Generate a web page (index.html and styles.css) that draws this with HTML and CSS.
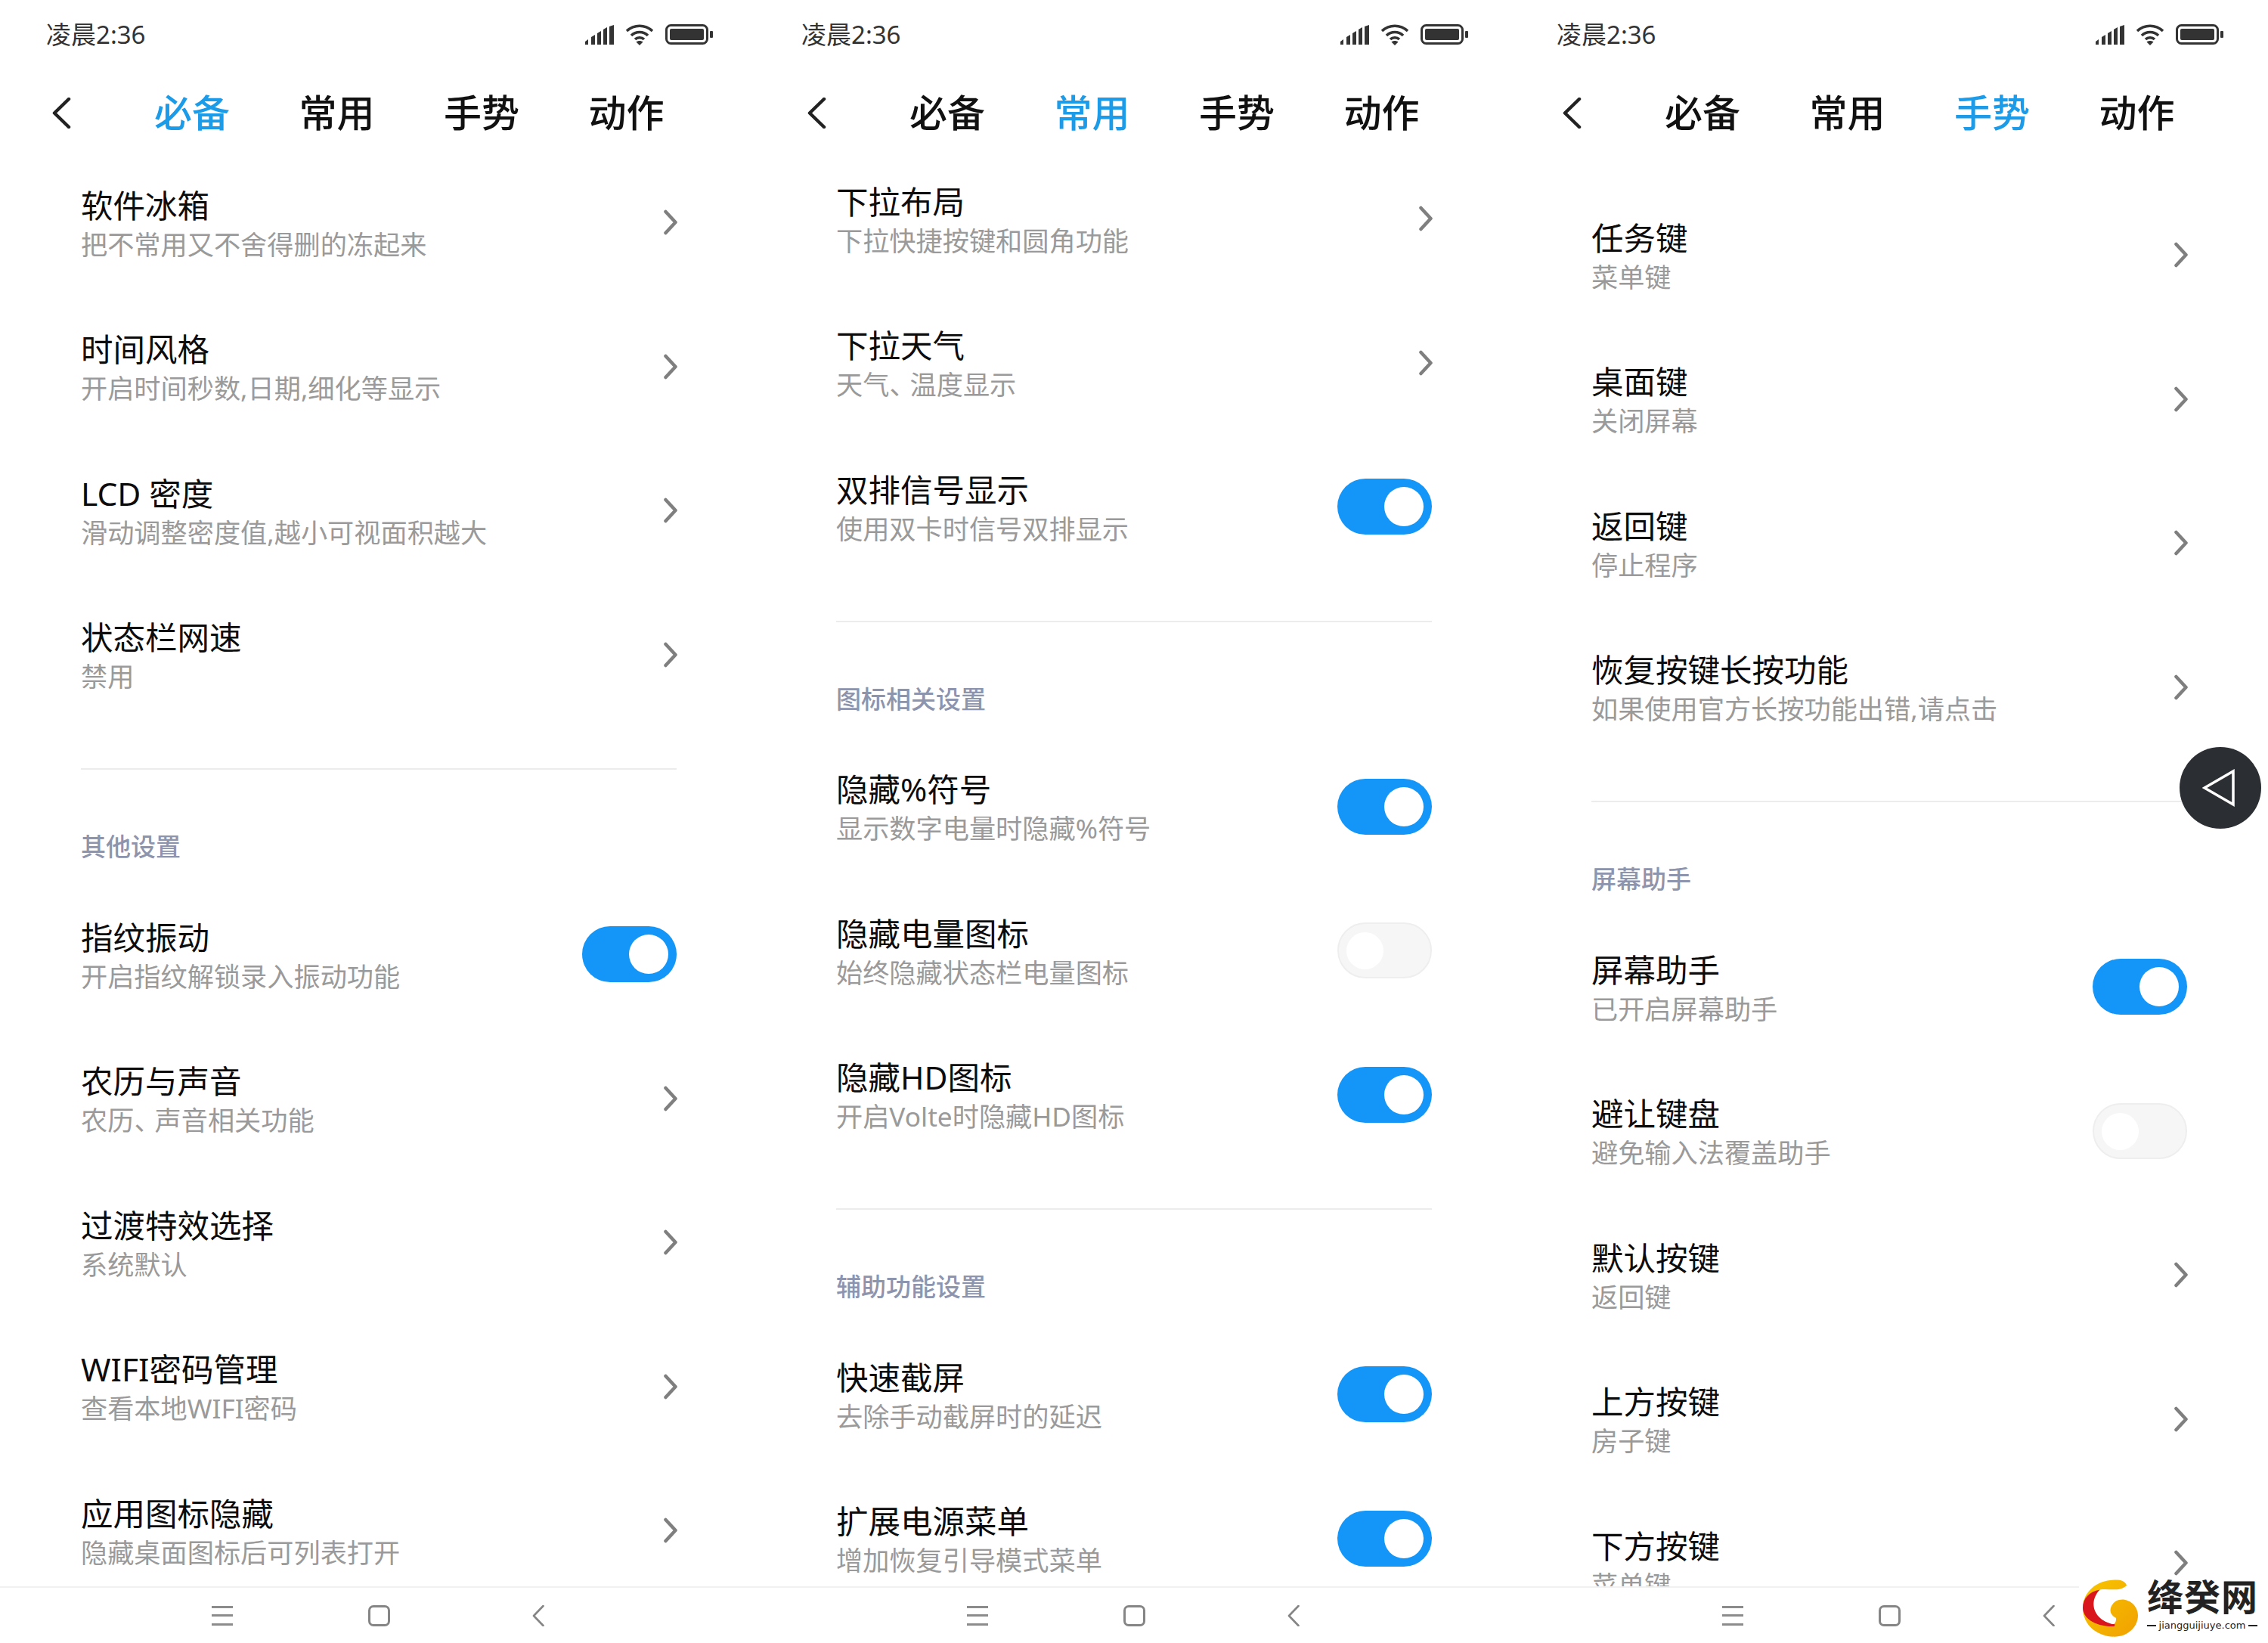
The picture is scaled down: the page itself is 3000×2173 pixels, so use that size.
FILE: index.html
```html
<!DOCTYPE html>
<html lang="zh-CN">
<head>
<meta charset="utf-8">
<title>设置</title>
<link rel="stylesheet" href="styles.css">
</head>
<body>
<svg class="defs" width="0" height="0" aria-hidden="true">
  <defs>
    <symbol id="chev" viewBox="0 0 20 34"><path d="M3.500 3 L16.500 17 L3.500 31" fill="none" stroke="#7f7f7f" stroke-width="4.500" stroke-linecap="round" stroke-linejoin="round"/></symbol>
    <symbol id="signal" viewBox="0 0 38 26">
      <path d="M0 26 V22 L4 19 V26Z M8 26 V16 L13 13 V26Z M16 26 V11 L21 8 V26Z M24 26 V6 L29 3 V26Z M32 26 V2 L38 0 V26Z" fill="#333"/>
    </symbol>
    <symbol id="wifi" viewBox="0 0 38 28">
      <path d="M2 9 C12 0 26 0 36 9 M8 15 C14 9 24 9 30 15 M13 20 C16 17 22 17 25 20" fill="none" stroke="#333" stroke-width="3.600"/>
      <path d="M14.500 23.500 L19 28 L23.500 23.500 C21 21.500 17 21.500 14.500 23.500Z" fill="#333"/>
    </symbol>
    <symbol id="batt" viewBox="0 0 63 27">
      <rect x="1.500" y="1.500" width="54" height="24" rx="6" fill="none" stroke="#333" stroke-width="3"/>
      <rect x="6" y="6" width="45" height="15" rx="2" fill="#333"/>
      <rect x="59" y="9" width="4" height="9" rx="1" fill="#333"/>
    </symbol>
  </defs>
</svg>

<main class="phones">
  <!-- 必备 -->
  <section class="phone">
    <header class="status">
      <span class="time">凌晨2:36</span>
      <span class="status-icons">
        <svg class="ic-signal"><use href="#signal"/></svg>
        <svg class="ic-wifi"><use href="#wifi"/></svg>
        <svg class="ic-batt"><use href="#batt"/></svg>
      </span>
    </header>
    <nav class="tabs">
      <svg class="back" viewBox="0 0 25 41"><path d="M22 2 L3 20.500 L22 39" fill="none" stroke="#222" stroke-width="4.500" stroke-linecap="round" stroke-linejoin="round"/></svg>
      <span class="tab active">必备</span><span class="tab">常用</span><span class="tab">手势</span><span class="tab">动作</span>
    </nav>
    <div class="list list-a">
      <div class="row"><div class="text"><div class="title">软件冰箱</div><div class="sub">把不常用又不舍得删的冻起来</div></div><svg class="chev"><use href="#chev"/></svg></div>
      <div class="row"><div class="text"><div class="title">时间风格</div><div class="sub">开启时间秒数,日期,细化等显示</div></div><svg class="chev"><use href="#chev"/></svg></div>
      <div class="row"><div class="text"><div class="title">LCD 密度</div><div class="sub">滑动调整密度值,越小可视面积越大</div></div><svg class="chev"><use href="#chev"/></svg></div>
      <div class="row"><div class="text"><div class="title">状态栏网速</div><div class="sub">禁用</div></div><svg class="chev"><use href="#chev"/></svg></div>
      <div class="divider"></div>
      <h2 class="group">其他设置</h2>
      <div class="row"><div class="text"><div class="title">指纹振动</div><div class="sub">开启指纹解锁录入振动功能</div></div><span class="toggle"></span></div>
      <div class="row"><div class="text"><div class="title">农历与声音</div><div class="sub">农历<span class="dun">、</span>声音相关功能</div></div><svg class="chev"><use href="#chev"/></svg></div>
      <div class="row"><div class="text"><div class="title">过渡特效选择</div><div class="sub">系统默认</div></div><svg class="chev"><use href="#chev"/></svg></div>
      <div class="row"><div class="text"><div class="title">WIFI密码管理</div><div class="sub">查看本地WIFI密码</div></div><svg class="chev"><use href="#chev"/></svg></div>
      <div class="row"><div class="text"><div class="title">应用图标隐藏</div><div class="sub">隐藏桌面图标后可列表打开</div></div><svg class="chev"><use href="#chev"/></svg></div>
    </div>
    <footer class="nav">
      <span class="nav-menu"></span><span class="nav-home"></span>
      <svg class="nav-back" viewBox="0 0 16 28"><path d="M14.500 1 L2 14 L14.500 27" fill="none" stroke="#858585" stroke-width="2.600" stroke-linecap="round" stroke-linejoin="round"/></svg>
    </footer>
  </section>

  <!-- 常用 -->
  <section class="phone">
    <header class="status">
      <span class="time">凌晨2:36</span>
      <span class="status-icons">
        <svg class="ic-signal"><use href="#signal"/></svg>
        <svg class="ic-wifi"><use href="#wifi"/></svg>
        <svg class="ic-batt"><use href="#batt"/></svg>
      </span>
    </header>
    <nav class="tabs">
      <svg class="back" viewBox="0 0 25 41"><path d="M22 2 L3 20.500 L22 39" fill="none" stroke="#222" stroke-width="4.500" stroke-linecap="round" stroke-linejoin="round"/></svg>
      <span class="tab">必备</span><span class="tab active">常用</span><span class="tab">手势</span><span class="tab">动作</span>
    </nav>
    <div class="list list-b">
      <div class="row"><div class="text"><div class="title">下拉布局</div><div class="sub">下拉快捷按键和圆角功能</div></div><svg class="chev"><use href="#chev"/></svg></div>
      <div class="row"><div class="text"><div class="title">下拉天气</div><div class="sub">天气<span class="dun">、</span>温度显示</div></div><svg class="chev"><use href="#chev"/></svg></div>
      <div class="row"><div class="text"><div class="title">双排信号显示</div><div class="sub">使用双卡时信号双排显示</div></div><span class="toggle"></span></div>
      <div class="divider"></div>
      <h2 class="group">图标相关设置</h2>
      <div class="row"><div class="text"><div class="title">隐藏%符号</div><div class="sub">显示数字电量时隐藏%符号</div></div><span class="toggle"></span></div>
      <div class="row"><div class="text"><div class="title">隐藏电量图标</div><div class="sub">始终隐藏状态栏电量图标</div></div><span class="toggle off"></span></div>
      <div class="row"><div class="text"><div class="title">隐藏HD图标</div><div class="sub">开启Volte时隐藏HD图标</div></div><span class="toggle"></span></div>
      <div class="divider"></div>
      <h2 class="group">辅助功能设置</h2>
      <div class="row"><div class="text"><div class="title">快速截屏</div><div class="sub">去除手动截屏时的延迟</div></div><span class="toggle"></span></div>
      <div class="row"><div class="text"><div class="title">扩展电源菜单</div><div class="sub">增加恢复引导模式菜单</div></div><span class="toggle"></span></div>
    </div>
    <footer class="nav">
      <span class="nav-menu"></span><span class="nav-home"></span>
      <svg class="nav-back" viewBox="0 0 16 28"><path d="M14.500 1 L2 14 L14.500 27" fill="none" stroke="#858585" stroke-width="2.600" stroke-linecap="round" stroke-linejoin="round"/></svg>
    </footer>
  </section>

  <!-- 手势 -->
  <section class="phone">
    <header class="status">
      <span class="time">凌晨2:36</span>
      <span class="status-icons">
        <svg class="ic-signal"><use href="#signal"/></svg>
        <svg class="ic-wifi"><use href="#wifi"/></svg>
        <svg class="ic-batt"><use href="#batt"/></svg>
      </span>
    </header>
    <nav class="tabs">
      <svg class="back" viewBox="0 0 25 41"><path d="M22 2 L3 20.500 L22 39" fill="none" stroke="#222" stroke-width="4.500" stroke-linecap="round" stroke-linejoin="round"/></svg>
      <span class="tab">必备</span><span class="tab">常用</span><span class="tab active">手势</span><span class="tab">动作</span>
    </nav>
    <div class="list list-c">
      <div class="row"><div class="text"><div class="title">任务键</div><div class="sub">菜单键</div></div><svg class="chev"><use href="#chev"/></svg></div>
      <div class="row"><div class="text"><div class="title">桌面键</div><div class="sub">关闭屏幕</div></div><svg class="chev"><use href="#chev"/></svg></div>
      <div class="row"><div class="text"><div class="title">返回键</div><div class="sub">停止程序</div></div><svg class="chev"><use href="#chev"/></svg></div>
      <div class="row"><div class="text"><div class="title">恢复按键长按功能</div><div class="sub">如果使用官方长按功能出错,请点击</div></div><svg class="chev"><use href="#chev"/></svg></div>
      <div class="divider"></div>
      <h2 class="group">屏幕助手</h2>
      <div class="row"><div class="text"><div class="title">屏幕助手</div><div class="sub">已开启屏幕助手</div></div><span class="toggle"></span></div>
      <div class="row"><div class="text"><div class="title">避让键盘</div><div class="sub">避免输入法覆盖助手</div></div><span class="toggle off"></span></div>
      <div class="row"><div class="text"><div class="title">默认按键</div><div class="sub">返回键</div></div><svg class="chev"><use href="#chev"/></svg></div>
      <div class="row"><div class="text"><div class="title">上方按键</div><div class="sub">房子键</div></div><svg class="chev"><use href="#chev"/></svg></div>
      <div class="row"><div class="text"><div class="title">下方按键</div><div class="sub">菜单键</div></div><svg class="chev"><use href="#chev"/></svg></div>
    </div>
    <footer class="nav">
      <span class="nav-menu"></span><span class="nav-home"></span>
      <svg class="nav-back" viewBox="0 0 16 28"><path d="M14.500 1 L2 14 L14.500 27" fill="none" stroke="#858585" stroke-width="2.600" stroke-linecap="round" stroke-linejoin="round"/></svg>
    </footer>

    <div class="float-btn">
      <svg viewBox="0 0 44 50"><path d="M3 25 L41 3 V47 Z" fill="none" stroke="#fff" stroke-width="3.500" stroke-linejoin="miter"/></svg>
    </div>

    <div class="mark">
      <svg class="mark-logo" viewBox="465 418 220 227">
        <defs><linearGradient id="gold" x1="0" y1="0" x2="1" y2="1"><stop offset="0" stop-color="#f9c600"/><stop offset="1" stop-color="#f0a000"/></linearGradient></defs>
        <path d="M640 440 C632 416 600 417 575 420 C510 426 465 475 465 530 C465 600 525 645 590 645 C645 645 685 605 685 560 C685 525 655 497 622 497 C595 497 575 518 575 540 C575 553 583 563 597 570 C600 585 592 596 580 600 C535 590 505 550 508 510 C510 490 520 470 533 458 C570 452 610 468 640 440Z" fill="url(#gold)"/>
        <path d="M533 458 C490 465 465 495 465 530 C465 568 510 606 590 604 L594 596 C540 590 505 550 508 510 C510 490 520 470 533 458Z" fill="#d9161c"/>
      </svg>
      <div class="mark-text">
        <div class="mark-name">绛癸网</div>
        <div class="mark-url"><i></i><span>jiangguijiuye.com</span><i></i></div>
      </div>
    </div>
  </section>
</main>
</body>
</html>
```

FILE: styles.css
```css
* { box-sizing: border-box; }
html, body { margin: 0; padding: 0; background: #fff; }
body {
  width: 3000px;
  height: 2173px;
  overflow: hidden;
  font-family: "Noto Sans", "Noto Sans CJK SC", sans-serif;
  color: #111;
}
.defs { position: absolute; }
.phones { display: flex; width: 3000px; height: 2173px; }
.phone {
  position: relative;
  flex: none;
  width: 999px;
  height: 2173px;
  display: flex;
  flex-direction: column;
  overflow: hidden;
}
.phone:last-child { width: 1002px; }

/* status bar */
.status {
  flex: none;
  height: 94px;
  padding: 0 56px 3px 61px;
  display: flex;
  align-items: center;
  justify-content: space-between;
}
.phone:last-child .status { padding-right: 59px; }
.time { font-size: 33px; line-height: 40px; color: #333; }
.status-icons { display: flex; align-items: center; gap: 15px; }
.ic-signal { width: 38px; height: 26px; }
.ic-wifi { width: 38px; height: 28px; }
.ic-batt { width: 63px; height: 27px; }

/* tabs */
.tabs {
  flex: none;
  height: 88px;
  margin: 11px 0 1px;
  padding-left: 69px;
  display: flex;
  align-items: center;
}
.back { width: 25px; height: 41px; margin-right: 110px; }
.tab { width: 191.5px; font-size: 50px; line-height: 60px; font-weight: 500; color: #111; }
.tab.active { color: #1c9be8; }

/* list */
.list {
  flex: 1;
  min-height: 0;
  overflow: hidden;
  padding-left: 107px;
  padding-right: 104px;
}
.list-a { padding-top: 5px; }
.list-b { padding-top: 0; }
.list-c { padding-top: 48px; padding-right: 107px; }

.row {
  height: 190.5px;
  display: flex;
  align-items: center;
  justify-content: space-between;
}
.text { padding-top: 5px; }
.title { font-size: 42.500px; line-height: 53px; color: #0c0c0c; white-space: nowrap; }
.sub { font-size: 35.200px; line-height: 51px; color: #9a9a9a; white-space: nowrap; }
.dun { letter-spacing: -8px; }
.chev { width: 20px; height: 34px; flex: none; margin-right: -2px; }

.divider { height: 2px; margin-top: 55px; background: #ececec; }
.group {
  margin: 0;
  height: 149px;
  padding-top: 77px;
  font-size: 33px;
  line-height: 50px;
  font-weight: 500;
  color: #8d94ad;
}

/* toggle */
.toggle {
  position: relative;
  flex: none;
  width: 125px;
  height: 74px;
  border-radius: 37px;
  background: #1496f8;
}
.toggle::after {
  content: "";
  position: absolute;
  top: 11px;
  right: 11px;
  width: 52px;
  height: 52px;
  border-radius: 50%;
  background: #fff;
}
.toggle.off { background: #f6f6f6; border: 2px solid #eeeeee; }
.toggle.off::after { top: 11px; left: 10px; right: auto; width: 49px; height: 49px; }

/* navigation bar */
.nav {
  position: relative;
  flex: none;
  height: 75px;
  border-top: 2px solid #f1f1f1;
  background: #fff;
  padding-left: 280px;
  display: flex;
  align-items: center;
}
.nav-menu {
  width: 28px;
  height: 26px;
  border-top: 3px solid #8c8c8c;
  border-bottom: 3px solid #8c8c8c;
  position: relative;
}
.nav-menu::after {
  content: "";
  position: absolute;
  left: 0;
  right: 0;
  top: 8.500px;
  height: 3px;
  background: #8c8c8c;
}
.nav-home {
  width: 29px;
  height: 28px;
  margin-left: 179px;
  border: 3px solid #858585;
  border-radius: 7px;
}
.nav-back { width: 16px; height: 28px; margin-left: 188px; }

/* floating button */
.float-btn {
  position: absolute;
  left: 885px;
  top: 988px;
  width: 108px;
  height: 108px;
  border-radius: 50%;
  background: #2b2e33;
  display: flex;
  align-items: center;
  justify-content: center;
}
.float-btn svg { width: 44px; height: 50px; margin-left: -5px; }

/* watermark */
.mark {
  position: absolute;
  left: 752px;
  top: 2084px;
  width: 250px;
  height: 89px;
  background: #fff;
  display: flex;
  gap: 12px;
  padding: 5px 0 0 5px;
}
.mark-logo { width: 73px; height: 76px; flex: none; }
.mark-name {
  font-family: "Liberation Serif", "Noto Sans CJK SC", sans-serif;
  font-size: 48px;
  line-height: 50px;
  font-weight: 700;
  color: #222;
  letter-spacing: 1px;
  white-space: nowrap;
}
.mark-url {
  display: flex;
  align-items: center;
  gap: 4px;
  width: 146px;
  margin-top: 3px;
  font-family: "DejaVu Sans", sans-serif;
  font-size: 13px;
  line-height: 16px;
  color: #222;
  white-space: nowrap;
}
.mark-url i { flex: 1; height: 2px; background: #222; }
```
